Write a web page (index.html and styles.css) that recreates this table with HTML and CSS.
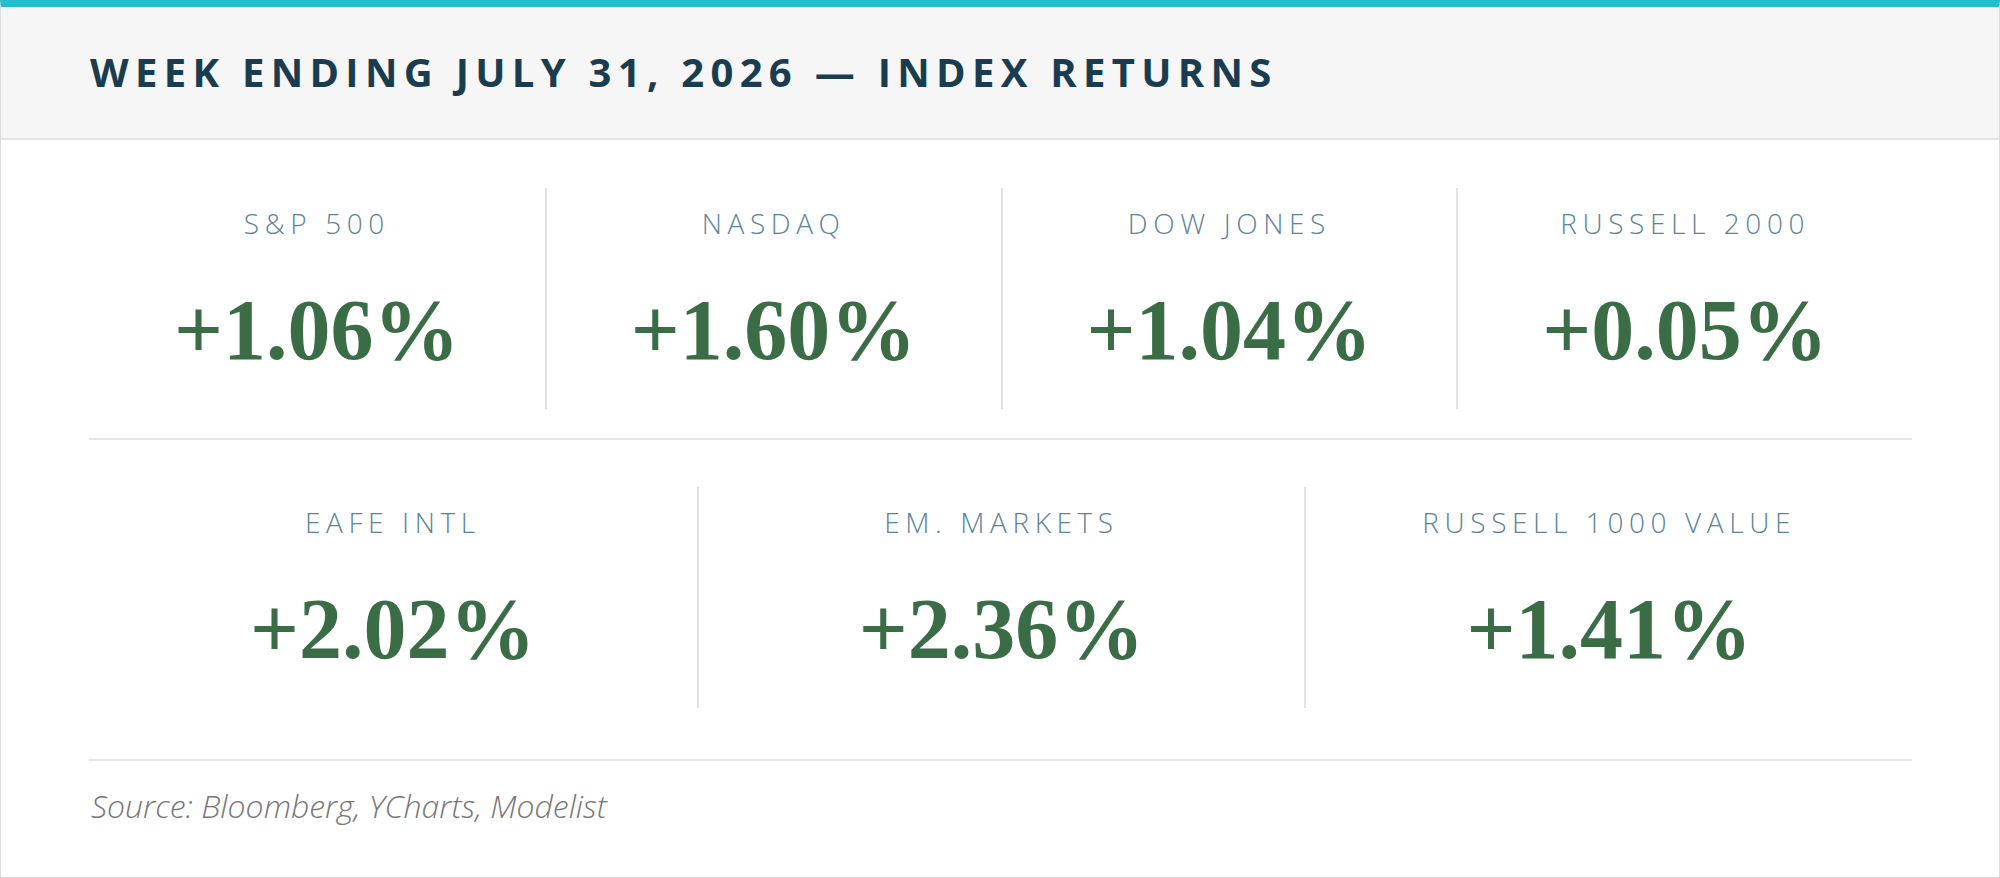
FILE: index.html
```html
<!DOCTYPE html>
<html lang="en">
<head>
<meta charset="utf-8">
<title>Index Returns</title>
<link rel="stylesheet" href="styles.css">
</head>
<body>
<div class="card">
  <header class="card-header">
    <h1 class="title">WEEK ENDING JULY 31, 2026 — INDEX RETURNS</h1>
  </header>
  <main class="card-body">
    <section class="row row-4">
      <div class="cell"><div class="label">S&amp;P 500</div><div class="value">+1.06%</div></div>
      <div class="cell"><div class="label">NASDAQ</div><div class="value">+1.60%</div></div>
      <div class="cell"><div class="label">DOW JONES</div><div class="value">+1.04%</div></div>
      <div class="cell"><div class="label">RUSSELL 2000</div><div class="value">+0.05%</div></div>
    </section>
    <section class="row row-3">
      <div class="cell"><div class="label">EAFE INTL</div><div class="value">+2.02%</div></div>
      <div class="cell"><div class="label">EM. MARKETS</div><div class="value">+2.36%</div></div>
      <div class="cell"><div class="label">RUSSELL 1000 VALUE</div><div class="value">+1.41%</div></div>
    </section>
    <p class="source">Source: Bloomberg, YCharts, Modelist</p>
  </main>
</div>
</body>
</html>
```

FILE: styles.css
```css
* { box-sizing: border-box; }
html, body { margin: 0; padding: 0; background: #ffffff; }
body { width: 2000px; height: 878px; overflow: hidden; }

.card {
  width: 2000px;
  height: 878px;
  border: 1px solid #dcdcdc;
  border-top: 7px solid #24bfcc;
  background: #ffffff;
  display: flex;
  flex-direction: column;
}

.card-header {
  height: 133px;
  background: #f6f6f6;
  border-bottom: 2px solid #e4e4e4;
  display: flex;
  align-items: center;
  padding-left: 89px;
  flex-shrink: 0;
}

.title {
  margin: 0;
  font-family: "Open Sans", "Liberation Sans", sans-serif;
  font-weight: 700;
  font-size: 40px;
  line-height: 1.362;
  letter-spacing: 6.3px;
  color: #1a3c50;
}

.card-body {
  padding: 0 87px 0 88px;
}

.row {
  display: grid;
  border-bottom: 2px solid #e6e6e2;
}
.row-4 { grid-template-columns: repeat(4, 1fr); padding: 48px 0 29px; }
.row-3 { grid-template-columns: repeat(3, 1fr); padding: 47px 0 51px; }

.cell {
  height: 221px;
  display: flex;
  flex-direction: column;
  align-items: center;
  padding-top: 18px;
}
.cell + .cell { border-left: 2px solid #e2e3dc; }

.label {
  font-family: "Open Sans", "Liberation Sans", sans-serif;
  font-weight: 300;
  font-size: 28px;
  line-height: 34px;
  letter-spacing: 5.6px;
  color: #5b8399;
  white-space: nowrap;
}

.value {
  margin-top: 47px;
  font-family: "Liberation Serif", "Times New Roman", serif;
  font-weight: 700;
  font-size: 86px;
  line-height: 1;
  color: #3a6c46;
  white-space: nowrap;
}

.source {
  margin: 26px 0 0 2px;
  font-family: "Open Sans", "Liberation Sans", sans-serif;
  font-weight: 300;
  font-style: italic;
  font-size: 32px;
  line-height: 38px;
  color: #777777;
}
```
